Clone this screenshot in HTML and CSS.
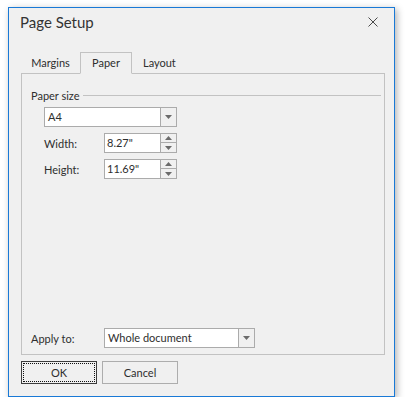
FILE: index.html
```html
<!DOCTYPE html>
<html>
<head>
<meta charset="utf-8">
<title>Page Setup</title>
<link rel="stylesheet" href="styles.css">
</head>
<body>
<div class="window">
  <div class="titlebar">
    <span class="title">Page Setup</span>
    <svg class="close" width="10" height="10" viewBox="0 0 10 10"><path d="M0.5 0.5L9.5 9.5M9.5 0.5L0.5 9.5" stroke="#4a4a4a" stroke-width="1" fill="none"/></svg>
  </div>
  <div class="content">
    <div class="tabs">
      <div class="tab tab-margins">Margins</div>
      <div class="tab tab-paper active">Paper</div>
      <div class="tab">Layout</div>
    </div>
    <div class="panel">
      <div class="group-header"><span>Paper size</span><div class="rule"></div></div>
      <div class="group">
        <div class="combo combo-size">
          <span class="value">A4</span>
          <span class="drop"><svg width="7" height="4" viewBox="0 0 7 4"><polygon points="0,0 7,0 3.5,4" fill="#6b6b6b"/></svg></span>
        </div>
        <div class="row">
          <span class="label">Width:</span>
          <div class="spin">
            <span class="value">8.27"</span>
            <span class="spin-btns">
              <span class="up"><svg width="7" height="4" viewBox="0 0 7 4"><polygon points="0,4 7,4 3.5,0" fill="#6b6b6b"/></svg></span>
              <span class="down"><svg width="7" height="4" viewBox="0 0 7 4"><polygon points="0,0 7,0 3.5,4" fill="#6b6b6b"/></svg></span>
            </span>
          </div>
        </div>
        <div class="row">
          <span class="label">Height:</span>
          <div class="spin">
            <span class="value">11.69"</span>
            <span class="spin-btns">
              <span class="up"><svg width="7" height="4" viewBox="0 0 7 4"><polygon points="0,4 7,4 3.5,0" fill="#6b6b6b"/></svg></span>
              <span class="down"><svg width="7" height="4" viewBox="0 0 7 4"><polygon points="0,0 7,0 3.5,4" fill="#6b6b6b"/></svg></span>
            </span>
          </div>
        </div>
      </div>
      <div class="row apply-row">
        <span class="label label-apply">Apply to:</span>
        <div class="combo combo-apply">
          <span class="value">Whole document</span>
          <span class="drop"><svg width="7" height="4" viewBox="0 0 7 4"><polygon points="0,0 7,0 3.5,4" fill="#6b6b6b"/></svg></span>
        </div>
      </div>
    </div>
    <div class="footer">
      <button class="btn btn-default">OK</button>
      <button class="btn">Cancel</button>
    </div>
  </div>
</div>
</body>
</html>
```

FILE: styles.css
```css
body {
  margin: 0;
  background: #ffffff;
  font-family: Lato, "Liberation Sans", sans-serif;
  font-size: 11px;
  color: #2e2e2e;
}

.window {
  margin: 7px 0 0 8px;
  width: 387px;
  height: 390px;
  box-sizing: border-box;
  border: 1px solid #1979d6;
  background: #f0f0f0;
  box-shadow: 2px 2px 7px rgba(0, 0, 0, 0.3);
  display: flex;
  flex-direction: column;
}

.titlebar {
  height: 44px;
  box-sizing: border-box;
  padding: 4px 16px 0 11px;
  display: flex;
  justify-content: space-between;
  align-items: flex-start;
}

.title {
  font-size: 15px;
  line-height: 20px;
  color: #333333;
}

.close {
  margin-top: 5px;
}

.content {
  padding: 0 9px 0 12px;
  display: flex;
  flex-direction: column;
}

.tabs {
  display: flex;
  margin-bottom: -1px;
  position: relative;
  z-index: 1;
}

.tab {
  height: 22px;
  box-sizing: border-box;
  border: 1px solid transparent;
  padding: 0 10px;
  line-height: 20px;
  text-align: center;
}

.tab-margins {
  width: 59px;
  padding: 0;
}

.tab-paper {
  width: 52px;
  padding: 0;
}

.tab.active {
  border-color: #c2c2c2;
  border-bottom-color: #f0f0f0;
  background: #f0f0f0;
}

.panel {
  height: 282px;
  box-sizing: border-box;
  border: 1px solid #c2c2c2;
  padding: 13px 3px 6px 9px;
  display: flex;
  flex-direction: column;
}

.group-header {
  display: flex;
  align-items: center;
  gap: 3px;
  line-height: 17px;
}

.rule {
  flex: 1;
  height: 1px;
  background: #c2c2c2;
}

.group {
  margin-top: 3px;
  padding-left: 13px;
  display: flex;
  flex-direction: column;
  gap: 6px;
}

.combo,
.spin {
  height: 20px;
  box-sizing: border-box;
  border: 1px solid #ababab;
  background: #ffffff;
  display: flex;
}

.combo-size {
  width: 133px;
}

.combo-apply {
  width: 151px;
}

.spin {
  width: 73px;
}

.value {
  flex: 1;
  padding-left: 3px;
  line-height: 18px;
  white-space: nowrap;
}

.spin .value {
  padding-left: 2px;
}

.drop {
  width: 15px;
  border-left: 1px solid #ababab;
  background: #f0f0f0;
  display: flex;
  align-items: center;
  justify-content: center;
}

.spin-btns {
  width: 15px;
  border-left: 1px solid #ababab;
  background: #f0f0f0;
  display: flex;
  flex-direction: column;
}

.up {
  height: 8px;
  display: flex;
  align-items: center;
  justify-content: center;
}

.down {
  flex: 1;
  border-top: 1px solid #ababab;
  display: flex;
  align-items: center;
  justify-content: center;
}

.row {
  display: flex;
  align-items: center;
}

.label {
  width: 60px;
}

.apply-row {
  margin-top: auto;
}

.label-apply {
  width: 73px;
}

.footer {
  margin-top: 6px;
  display: flex;
  gap: 5px;
}

.btn {
  width: 76px;
  height: 23px;
  box-sizing: border-box;
  border: 1px solid #adadad;
  background: #f0f0f0;
  font: inherit;
  color: #2e2e2e;
  padding: 0;
}

.btn-default {
  border-color: #3c3c3c;
  outline: 1px dotted #111111;
  outline-offset: -3px;
}
```
